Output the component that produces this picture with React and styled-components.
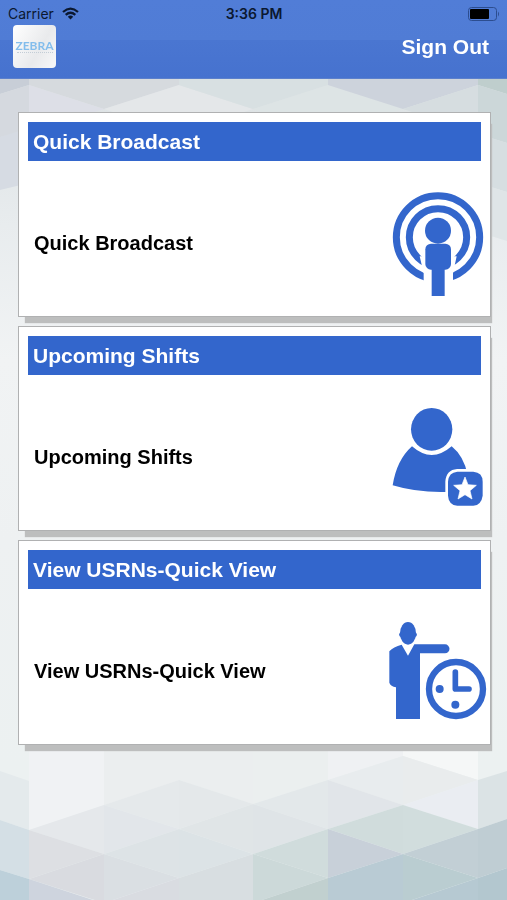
import React from "react";
import styled, { createGlobalStyle } from "styled-components";

const BLUE = "#3366cc";

const GlobalStyle = createGlobalStyle`
  *, *::before, *::after { box-sizing: border-box; }
  body {
    margin: 0;
    font-family: "Liberation Sans", Arial, sans-serif;
    background: #edf0f1;
  }
`;

const Page = styled.div`
  min-height: 100vh;
  display: flex;
  flex-direction: column;
`;

const Backdrop = styled.svg`
  position: fixed;
  inset: 0;
  z-index: -1;
  width: 100%;
  height: 100%;
`;

const Header = styled.header`
  background: linear-gradient(#517dd7 0, #507cd5 40px, #4a76d1 40px, #4672cf 100%);
  border-bottom: 1px solid #5c80cc;
`;

const StatusBar = styled.div`
  display: grid;
  grid-template-columns: 1fr auto 1fr;
  align-items: center;
  height: 25px;
  padding: 2px 7px 0 8px;
  font-family: Inter, Roboto, sans-serif;
  font-size: 14px;
  line-height: 20px;
  color: #0b1830;
`;

const Carrier = styled.span`
  display: flex;
  align-items: center;
  gap: 8px;
`;

const Clock = styled.time`
  font-weight: 600;
`;

const Battery = styled.svg`
  justify-self: end;
`;

const NavBar = styled.nav`
  display: flex;
  align-items: center;
  justify-content: space-between;
  padding: 0 18px 10px 13px;
`;

const Logo = styled.div`
  display: flex;
  flex-direction: column;
  align-items: center;
  justify-content: center;
  width: 43px;
  height: 43px;
  border-radius: 4px;
  background: linear-gradient(120deg, #ffffff, #e9eaec 60%, #f8f8f9);
  font-family: Lato, sans-serif;
  font-size: 12px;
  font-weight: 700;
  line-height: 12px;
  color: #83bdec;
`;

const LogoRule = styled.span`
  width: 36px;
  border-top: 1px dotted #c3cdd6;
`;

const SignOut = styled.button`
  border: 0;
  padding: 0;
  background: none;
  font: bold 21px/24px "Liberation Sans", Arial, sans-serif;
  color: #fff;
  cursor: pointer;
`;

const Cards = styled.main`
  display: flex;
  flex-direction: column;
  gap: 9px;
  padding: 33px 16px 33px 18px;
`;

const Card = styled.section`
  padding: 9px 2px 0 9px;
  border: 1px solid #b0b1b2;
  background: #fff;
  box-shadow: 4px 9px 1px -3px #bdbebe;
`;

const CardTitle = styled.h2`
  margin: 0 7px 0 0;
  padding: 0 5px;
  background: ${BLUE};
  font-size: 21px;
  line-height: 39px;
  color: #fff;
`;

const CardLink = styled.a`
  display: flex;
  align-items: center;
  justify-content: space-between;
  min-height: 155px;
  padding: 8px 0 0 6px;
  font-size: 20px;
  font-weight: bold;
  line-height: 24px;
  color: #000;
  text-decoration: none;
`;

const CardIcon = styled.svg`
  flex: none;
  width: 100px;
  height: 109px;
  fill: ${BLUE};
`;

const FACETS = [
  ["0,79 40,79 29,85 0,94", "#c8ced7"],
  ["29,79 179,79 179,85 104,109 29,85", "#d6dade"],
  ["29,85 104,109 29,134", "#dddfe7"],
  ["179,85 253,109 179,134 104,109", "#e4e7e9"],
  ["179,79 328,79 328,85 253,109 179,85", "#d8e0e2"],
  ["253,109 328,85 403,109 328,134", "#dde4e5"],
  ["328,79 478,79 478,85 403,109 328,85", "#cdd3dc"],
  ["403,109 478,85 478,134", "#d6dde0"],
  ["478,79 507,79 507,94 478,85", "#bfcecd"],
  ["478,85 507,94 507,143 478,134", "#ccd7d9"],
  ["478,134 507,143 507,192 478,183", "#d6dee1"],
  ["478,183 507,192 507,241 478,232", "#dfe5e7"],
  ["0,94 29,85 29,134 0,137", "#d5d9df"],
  ["0,137 29,128 29,183 0,190", "#d6dbe3"],
  ["0,771 29,781 29,830 0,820", "#e4eaec"],
  ["0,820 29,830 29,879 0,870", "#d4dfe5"],
  ["0,870 29,879 29,900 0,900", "#bdd0da"],
  ["29,740 104,740 104,805 29,830", "#f0f2f4"],
  ["29,830 104,805 104,854", "#e5e8eb"],
  ["29,830 104,854 29,879", "#dddfe3"],
  ["29,879 104,854 104,903", "#d9dbe0"],
  ["29,879 93,900 29,900", "#ced4de"],
  ["104,740 253,740 253,804 179,780 104,805", "#ebeeef"],
  ["104,805 179,780 179,829", "#e5e9eb"],
  ["104,805 179,829 104,854", "#e2e6ea"],
  ["104,854 179,829 179,878", "#dde3e6"],
  ["104,854 179,878 104,903", "#dadfe3"],
  ["104,903 179,878 179,903", "#d9dce1"],
  ["179,780 253,804 179,829", "#e4e8ea"],
  ["179,829 253,804 253,854", "#e0e5e7"],
  ["179,829 253,854 179,878", "#dce3e6"],
  ["179,878 253,854 253,903 179,903", "#d8dee1"],
  ["253,740 328,740 328,780 253,804", "#ebefef"],
  ["253,804 328,780 328,829", "#e3e8ea"],
  ["253,804 328,829 253,854", "#dfe4e7"],
  ["253,854 328,829 328,878", "#d0dcdc"],
  ["253,854 328,878 253,903", "#ccd9d9"],
  ["253,903 328,878 328,903", "#c1d0cf"],
  ["328,740 403,740 403,756 328,780", "#eff1f3"],
  ["328,780 403,756 403,805", "#e8ecee"],
  ["328,780 403,805 328,829", "#e1e5e9"],
  ["328,829 403,805 403,854", "#d0dcdc"],
  ["328,829 403,854 328,878", "#c8d0d9"],
  ["328,878 403,854 403,903 328,903", "#b9cbd4"],
  ["403,740 478,740 478,780 403,756", "#f5f7f7"],
  ["403,756 478,780 403,805", "#e9eced"],
  ["403,805 478,780 478,829", "#eaedf2"],
  ["403,805 478,829 403,854", "#d1dddd"],
  ["403,854 478,829 478,878", "#c2cfd5"],
  ["403,854 478,878 403,903", "#bacdd1"],
  ["403,903 478,878 478,903", "#b6c9d2"],
  ["478,780 507,771 507,819 478,829", "#dbe3e5"],
  ["478,829 507,819 507,868 478,878", "#bfcdd3"],
  ["478,878 507,868 507,900 478,900", "#b3c7cf"],
];

function FacetedBackdrop() {
  return (
    <Backdrop viewBox="0 0 507 900" preserveAspectRatio="none" aria-hidden="true">
      <defs>
        <linearGradient id="base" x1="0" y1="0" x2="0" y2="1">
          <stop offset="0" stopColor="#d8dde1" />
          <stop offset="0.12" stopColor="#dee3e5" />
          <stop offset="0.25" stopColor="#e8ecee" />
          <stop offset="0.4" stopColor="#f1f3f4" />
          <stop offset="0.6" stopColor="#eef1f2" />
          <stop offset="0.85" stopColor="#ecf1f1" />
        </linearGradient>
      </defs>
      <rect width="507" height="900" fill="url(#base)" />
      {FACETS.map(([points, fill]) => (
        <polygon key={points} points={points} fill={fill} />
      ))}
    </Backdrop>
  );
}

function WifiIcon() {
  return (
    <svg width="17" height="13" viewBox="0 0 17 13" aria-hidden="true">
      <g fill="none" stroke="#0b1830" strokeWidth="2.2">
        <path d="M1 5Q8.500 -1.600 16 5" />
        <path d="M3.700 7.900Q8.500 3.600 13.300 7.900" />
      </g>
      <path d="M5.800 9.700Q8.500 7.300 11.200 9.700L8.500 12.500Z" fill="#0b1830" />
    </svg>
  );
}

function BroadcastIcon() {
  return (
    <CardIcon viewBox="24 24 300 327" aria-hidden="true">
      <g fill="none" stroke={BLUE} strokeWidth="21">
        <circle cx="174" cy="172" r="125" />
        <circle cx="174" cy="172" r="86" />
      </g>
      <path d="M119 229L131 280V340H219V280L230 229Z" fill="#fff" />
      <circle cx="174" cy="152" r="39" />
      <rect x="136" y="191" width="77" height="78" rx="17" />
      <rect x="155" y="260" width="39" height="88" />
    </CardIcon>
  );
}

function ShiftsIcon() {
  return (
    <CardIcon viewBox="24 21 300 327" aria-hidden="true">
      <ellipse cx="155" cy="103" rx="62" ry="64" />
      <path d="M96 154Q155 206 215 154Q252 184 263 240L220 290Q120 296 38 271Q50 195 96 154Z" />
      <path
        d="M232 230H280Q308 232 308 260V302Q304 330 280 332H232Q206 330 204 302V260Q206 232 232 230Z"
        stroke="#fff"
        strokeWidth="16"
        paintOrder="stroke"
      />
      <path
        d="M255 246L264 269L289 271L270 287L276 312L255 299L234 312L240 287L221 271L246 269Z"
        fill="#fff"
        stroke="#fff"
        strokeWidth="2"
        strokeLinejoin="round"
      />
    </CardIcon>
  );
}

function PersonClockIcon() {
  return (
    <CardIcon viewBox="24 18 300 327" aria-hidden="true">
      <ellipse cx="84" cy="70" rx="24" ry="34" />
      <ellipse cx="84" cy="74" rx="27" ry="12" />
      <path d="M65 104L84 137L103 103H195A13 13 0 0 1 195 130H120V327H48V232Q32 229 28 218V124Q40 110 65 104Z" />
      <g fill="none" stroke={BLUE}>
        <circle cx="228" cy="237" r="81" strokeWidth="19" />
        <path d="M226 186V237H267" strokeWidth="17" strokeLinecap="round" strokeLinejoin="round" />
      </g>
      <circle cx="179" cy="237" r="12" />
      <circle cx="226" cy="284" r="12" />
    </CardIcon>
  );
}

const ITEMS = [
  { id: "broadcast", title: "Quick Broadcast", Icon: BroadcastIcon },
  { id: "shifts", title: "Upcoming Shifts", Icon: ShiftsIcon },
  { id: "usrns", title: "View USRNs-Quick View", Icon: PersonClockIcon },
];

export default function App() {
  return (
    <Page>
      <GlobalStyle />
      <FacetedBackdrop />
      <Header>
        <StatusBar>
          <Carrier>
            Carrier
            <WifiIcon />
          </Carrier>
          <Clock>3:36 PM</Clock>
          <Battery width="32" height="14" viewBox="0 0 32 14" aria-label="Battery">
            <rect x="0.500" y="0.500" width="28" height="13" rx="3" fill="none" stroke="#2c4d8f" />
            <rect x="2" y="2" width="19" height="10" rx="1" fill="#000" />
            <path d="M30 4.500Q32 7 30 9.500Z" fill="#2c4d8f" />
          </Battery>
        </StatusBar>
        <NavBar>
          <Logo>
            ZEBRA
            <LogoRule />
          </Logo>
          <SignOut type="button">Sign Out</SignOut>
        </NavBar>
      </Header>
      <Cards>
        {ITEMS.map(({ id, title, Icon }) => (
          <Card key={id} aria-labelledby={id}>
            <CardTitle id={id}>{title}</CardTitle>
            <CardLink href={`#${id}`}>
              {title}
              <Icon />
            </CardLink>
          </Card>
        ))}
      </Cards>
    </Page>
  );
}
